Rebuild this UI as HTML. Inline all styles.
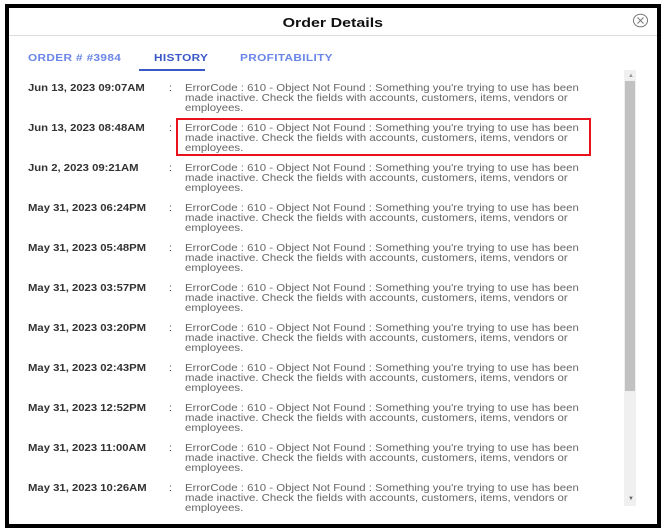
<!DOCTYPE html>
<html><head><meta charset="utf-8"><style>
*{margin:0;padding:0;box-sizing:border-box}
body{width:666px;height:532px;background:#fff;position:relative;overflow:hidden;font-family:"Liberation Sans",sans-serif}
.frame{position:absolute;left:5px;top:4px;width:656px;height:524px;border:4px solid #000;background:#fff;overflow:hidden}
.title{position:absolute;left:0;right:0;top:6px;text-align:center}
.title span{display:inline-block;font-weight:bold;font-size:13px;color:#111;transform:scaleX(1.23)}
.hr{position:absolute;left:0;right:0;top:27px;border-top:1px solid #ddd}
.close{position:absolute;left:623px;top:5px}
.tab{position:absolute;top:45px;font-size:10px;font-weight:bold;color:#6a86e8;letter-spacing:.3px;transform:scaleX(1.18);transform-origin:left}
.ul{position:absolute;left:130px;top:61px;width:66px;height:2px;background:#3a57c8}
.row{position:absolute;left:19px;font-size:10px;line-height:10px}
.d{position:absolute;left:0;top:0;font-weight:bold;color:#333;white-space:nowrap;transform:scaleX(1.13);transform-origin:left}
.c{position:absolute;left:141px;top:0;color:#333}
.t{position:absolute;left:157px;top:0;width:360px;color:#666;transform:scaleX(1.14);transform-origin:left}
.sb{position:absolute;left:615px;top:62px;width:12px;height:436px;background:#f0f0f0}
.th{position:absolute;left:616px;top:73px;width:10px;height:310px;background:#c1c1c1}
.red{position:absolute;left:167px;top:110px;width:415px;height:38px;border:2px solid #e8121c}
</style></head><body>
<div class="frame">
<div class="title"><span>Order Details</span></div>
<div class="hr"></div>
<svg class="close" width="17" height="15" viewBox="0 0 17 15"><ellipse cx="8.5" cy="7.5" rx="7" ry="6.3" fill="none" stroke="#777" stroke-width="1"/><path d="M5.5 4.5l6 6M11.5 4.5l-6 6" stroke="#777" stroke-width="1"/></svg>
<div class="tab" style="left:19px">ORDER # #3984</div>
<div class="tab" style="left:145px;color:#3a57c8">HISTORY</div>
<div class="tab" style="left:231px">PROFITABILITY</div>
<div class="ul"></div>
<div class="sb"></div><div class="th"></div>
<div style="position:absolute;left:619px;top:65px;font-size:6px;color:#999">▲</div>
<div style="position:absolute;left:619px;top:488px;font-size:6px;color:#666">▼</div>
<div class="red"></div>
<div id="rows"></div>
</div>
<script>
var d=["Jun 13, 2023 09:07AM","Jun 13, 2023 08:48AM","Jun 2, 2023 09:21AM","May 31, 2023 06:24PM","May 31, 2023 05:48PM","May 31, 2023 03:57PM","May 31, 2023 03:20PM","May 31, 2023 02:43PM","May 31, 2023 12:52PM","May 31, 2023 11:00AM","May 31, 2023 10:26AM"];
var h="";d.forEach(function(x,i){h+='<div class="row" style="top:'+(76+i*40)+'px"><div class="d">'+x+'</div><div class="c">:</div><div class="t">ErrorCode : 610 - Object Not Found : Something you\'re trying to use has been made inactive. Check the fields with accounts, customers, items, vendors or employees.</div></div>'});
document.getElementById("rows").innerHTML=h;
</script>
</body></html>
